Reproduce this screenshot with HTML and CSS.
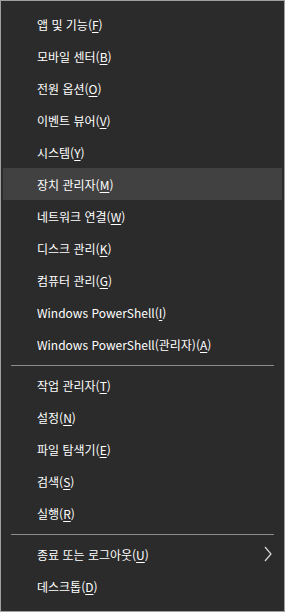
FILE: index.html
```html
<!DOCTYPE html>
<html lang="ko">
<head>
<meta charset="utf-8">
<link rel="stylesheet" href="styles.css">
</head>
<body>
<div class="menu">
  <div class="item">앱 및 기능(<u>F</u>)</div>
  <div class="item">모바일 센터(<u>B</u>)</div>
  <div class="item">전원 옵션(<u>O</u>)</div>
  <div class="item">이벤트 뷰어(<u>V</u>)</div>
  <div class="item">시스템(<u>Y</u>)</div>
  <div class="item active">장치 관리자(<u>M</u>)</div>
  <div class="item">네트워크 연결(<u>W</u>)</div>
  <div class="item">디스크 관리(<u>K</u>)</div>
  <div class="item">컴퓨터 관리(<u>G</u>)</div>
  <div class="item">Windows PowerShell(<u>I</u>)</div>
  <div class="item">Windows PowerShell(관리자)(<u>A</u>)</div>
  <div class="sep"></div>
  <div class="item">작업 관리자(<u>T</u>)</div>
  <div class="item">설정(<u>N</u>)</div>
  <div class="item">파일 탐색기(<u>E</u>)</div>
  <div class="item">검색(<u>S</u>)</div>
  <div class="item">실행(<u>R</u>)</div>
  <div class="sep"></div>
  <div class="item sub"><span>종료 또는 로그아웃(<u>U</u>)</span><svg class="chev" width="8" height="16" viewBox="0 0 8 16"><polyline points="1,1 7,8 1,15" fill="none" stroke="#d8d8d8" stroke-width="1.2"/></svg></div>
  <div class="item">데스크톱(<u>D</u>)</div>
</div>
</body>
</html>
```
FILE: styles.css
```css
html, body {
  margin: 0;
  padding: 0;
  background: #2b2b2b;
}
.menu {
  box-sizing: border-box;
  width: 285px;
  height: 612px;
  border: 1px solid #a0a0a0;
  background: #2b2b2b;
  padding-top: 7px;
  display: flex;
  flex-direction: column;
  font-family: "Noto Sans CJK KR", "Noto Sans", sans-serif;
  font-size: 12px;
  color: #ffffff;
}
.item {
  height: 32px;
  display: flex;
  align-items: center;
  padding-left: 34px;
  margin: 0 2px;
  white-space: pre;
}
.item u {
  text-decoration: underline;
  text-underline-offset: 2px;
}
.active {
  background: #414141;
}
.sep {
  height: 1px;
  background: #8c8c8c;
  margin: 5px 10px 3px 10px;
}
.sub {
  justify-content: space-between;
  padding-right: 10px;
}
.chev {
  display: block;
}
```
